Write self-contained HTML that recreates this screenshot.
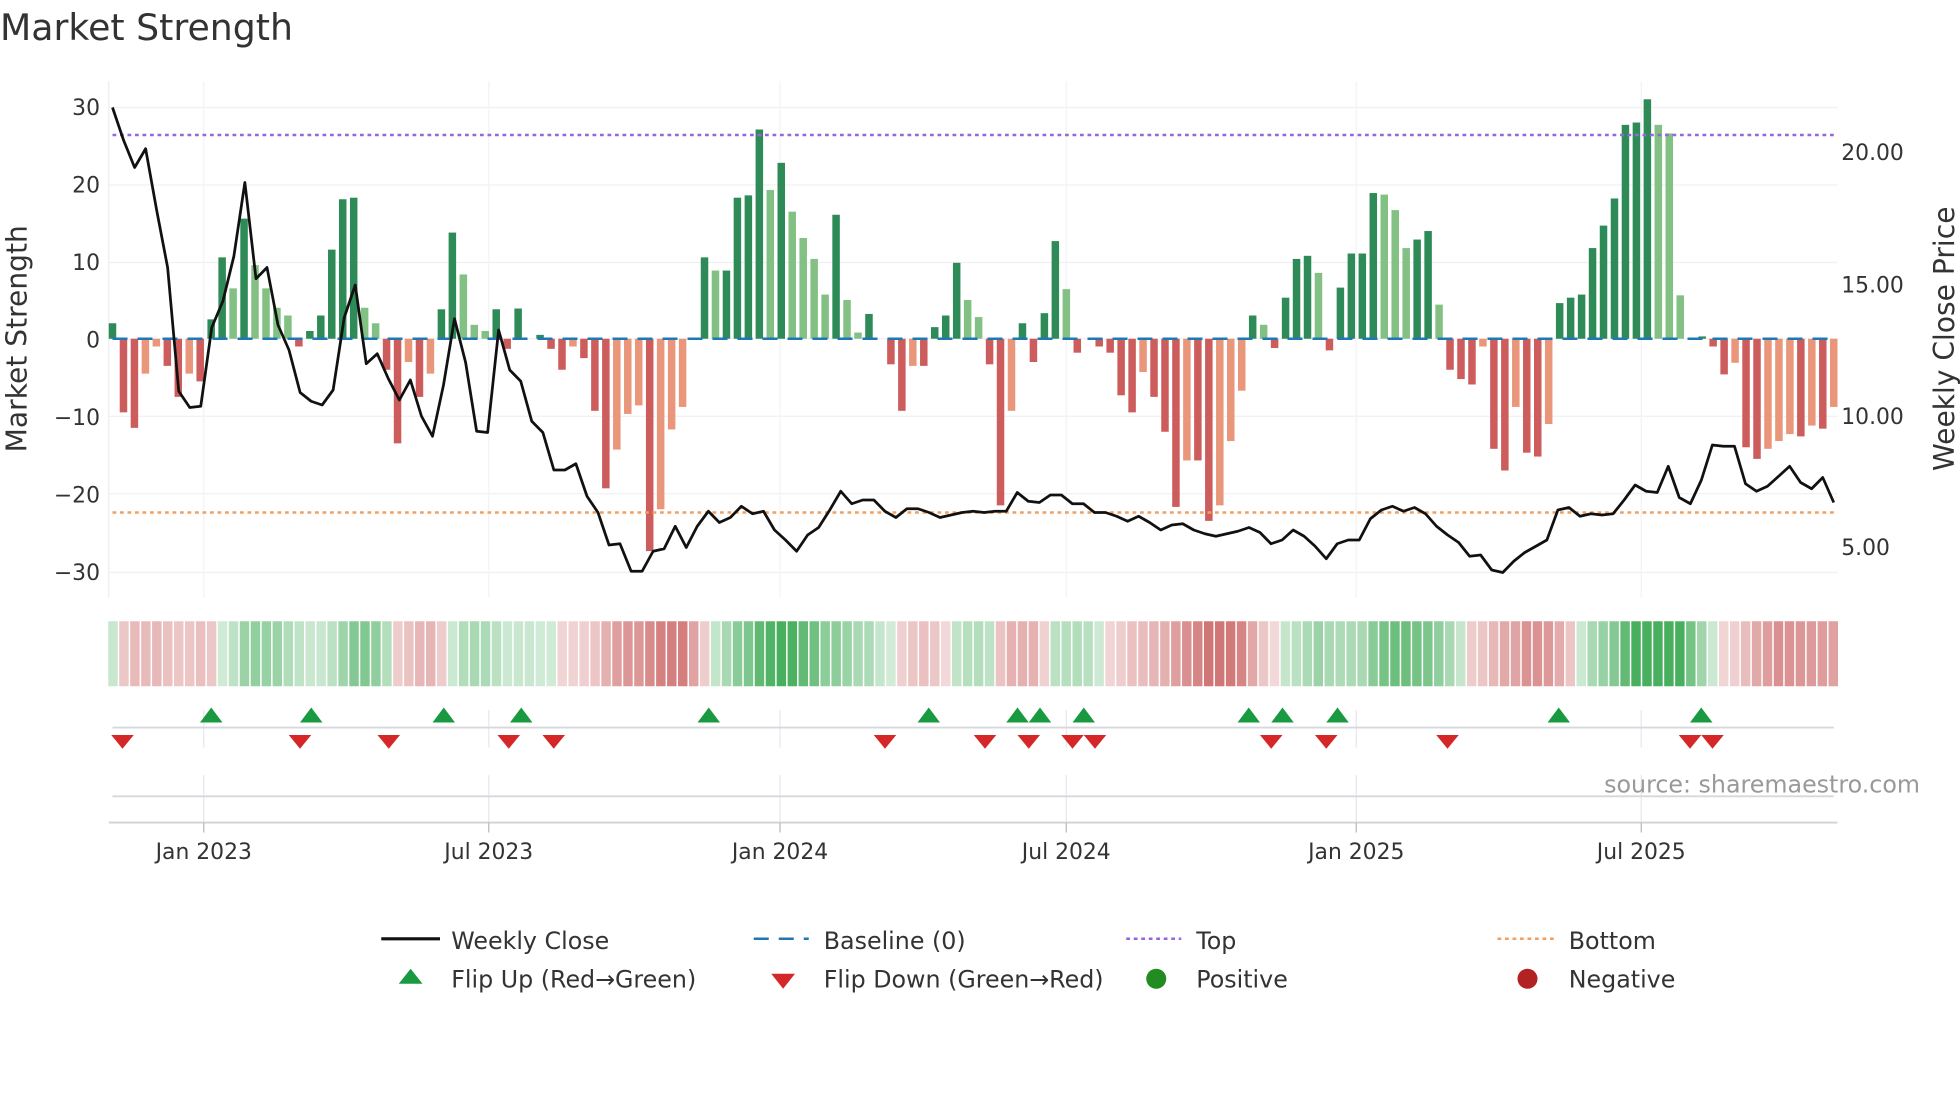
<!DOCTYPE html>
<html><head><meta charset="utf-8"><style>
html,body{margin:0;padding:0;background:#fff;width:1960px;height:1102px;overflow:hidden}
svg{display:block;font-family:"DejaVu Sans","Liberation Sans",sans-serif}
</style></head><body>
<svg id="s" width="1960" height="1102" viewBox="0 0 1568 881.6" xmlns="http://www.w3.org/2000/svg">
<text x="0" y="32" font-size="29" fill="#333">Market Strength</text>
<g id="g"></g>
<text x="1536" y="634" font-size="19" fill="#999" text-anchor="end">source: sharemaestro.com</text>
<text transform="translate(21,271) rotate(-90)" font-size="22.5" fill="#333" text-anchor="middle">Market Strength</text>
<text transform="translate(1563,271) rotate(-90)" font-size="22.5" fill="#333" text-anchor="middle">Weekly Close Price</text>
<g font-size="17.5" fill="#333">
<text x="80" y="92" text-anchor="end">30</text>
<text x="80" y="154" text-anchor="end">20</text>
<text x="80" y="216" text-anchor="end">10</text>
<text x="80" y="278" text-anchor="end">0</text>
<text x="80" y="340" text-anchor="end">−10</text>
<text x="80" y="402" text-anchor="end">−20</text>
<text x="80" y="464" text-anchor="end">−30</text>
<text x="1473" y="128">20.00</text>
<text x="1473" y="234">15.00</text>
<text x="1473" y="339">10.00</text>
<text x="1473" y="444">5.00</text>
<text x="163" y="687" text-anchor="middle">Jan 2023</text>
<text x="391" y="687" text-anchor="middle">Jul 2023</text>
<text x="624" y="687" text-anchor="middle">Jan 2024</text>
<text x="853" y="687" text-anchor="middle">Jul 2024</text>
<text x="1085" y="687" text-anchor="middle">Jan 2025</text>
<text x="1313" y="687" text-anchor="middle">Jul 2025</text>
</g>
<g font-size="19" fill="#333">
<line x1="305" y1="751" x2="352" y2="751" stroke="#111" stroke-width="2.5"/>
<text x="361" y="759">Weekly Close</text>
<line x1="603" y1="751" x2="647" y2="751" stroke="#1f77b4" stroke-width="2" stroke-dasharray="12,8"/>
<text x="659" y="759">Baseline (0)</text>
<line x1="901" y1="751" x2="945" y2="751" stroke="#9467dd" stroke-width="2" stroke-dasharray="3,3"/>
<text x="957" y="759">Top</text>
<line x1="1198" y1="751" x2="1243" y2="751" stroke="#f0a060" stroke-width="2" stroke-dasharray="3,3"/>
<text x="1255" y="759">Bottom</text>
<polygon points="319,787 338,787 328.5,775" fill="#1a9a40"/>
<text x="361" y="790">Flip Up (Red→Green)</text>
<polygon points="617,779 636,779 626.5,791" fill="#d62728"/>
<text x="659" y="790">Flip Down (Green→Red)</text>
<circle cx="925" cy="783" r="8" fill="#228b22"/>
<text x="957" y="790">Positive</text>
<circle cx="1222" cy="783" r="8" fill="#b22222"/>
<text x="1255" y="790">Negative</text>
</g>
</svg>
<script>
var vals=[2,-9.5,-11.5,-4.5,-1,-3.5,-7.5,-4.5,-5.5,2.5,10.5,6.5,15.5,9.5,6.5,4,3,-1,1,3,11.5,18,18.2,4,2,-4,-13.5,-3,-7.5,-4.5,3.8,13.7,8.3,1.8,1,3.8,-1.3,3.9,0,0.5,-1.3,-4,-1,-2.5,-9.3,-19.3,-14.3,-9.7,-8.6,-27.4,-22,-11.7,-8.8,0,10.5,8.8,8.8,18.2,18.5,27,19.2,22.7,16.4,13,10.3,5.7,16,5,0.8,3.2,0,-3.3,-9.3,-3.5,-3.5,1.5,3,9.8,5,2.8,-3.3,-21.5,-9.3,2,-3,3.3,12.6,6.4,-1.8,0,-1,-1.8,-7.3,-9.5,-4.3,-7.5,-12,-21.7,-15.7,-15.7,-23.5,-21.5,-13.2,-6.7,3,1.8,-1.2,5.3,10.3,10.7,8.5,-1.5,6.6,11,11,18.8,18.6,16.6,11.7,12.8,13.9,4.4,-4,-5.2,-5.9,-1,-14.2,-17,-8.8,-14.7,-15.2,-11,4.6,5.3,5.7,11.7,14.6,18.1,27.6,27.9,30.9,27.6,26.5,5.6,0,0.3,-1,-4.6,-3.1,-14,-15.5,-14.2,-13.2,-12.3,-12.6,-11.2,-11.6,-8.8];
var n=vals.length,x0=90,x1=1467,st=(x1-x0)/(n-1),h='';
[86,148,210,271,333,395,458].forEach(function(y){h+='<line x1="87" x2="1470" y1="'+y+'" y2="'+y+'" stroke="#eef0f4" stroke-width="1"/>';});
[163,391,624,853,1085,1313].forEach(function(x){h+='<line x1="'+x+'" x2="'+x+'" y1="65" y2="478" stroke="#f2f3f6"/><line x1="'+x+'" x2="'+x+'" y1="568" y2="598" stroke="#e6e8ee"/><line x1="'+x+'" x2="'+x+'" y1="620" y2="665" stroke="#e6e8ee"/>';});
h+='<line x1="87" x2="87" y1="65" y2="478" stroke="#eceef2"/>';
for(var i=0;i<n;i++){var v=vals[i],p=i?vals[i-1]:0,x=x0+i*st;if(v==0)continue;
var dark=Math.abs(v)>=Math.abs(p)||(v>0)!=(p>0);var c=v>0?(dark?'#2e8b57':'#82c183'):(dark?'#cd5c5c':'#e9967a');
var y=271-v*6.2;h+='<rect x="'+(x-3)+'" y="'+Math.min(y,271)+'" width="6" height="'+Math.abs(v*6.2)+'" fill="'+c+'"/>';}
h+='<line x1="90" x2="1467" y1="271" y2="271" stroke="#1f77b4" stroke-width="2" stroke-dasharray="12,8"/>';
h+='<line x1="90" x2="1470" y1="108" y2="108" stroke="#9467dd" stroke-width="2" stroke-dasharray="3,3"/>';
h+='<line x1="90" x2="1470" y1="410" y2="410" stroke="#f0a060" stroke-width="2" stroke-dasharray="3,3"/>';
var L=[86,112,134,119,168,214,313,326,325,262,241,205,146,223,214,260,280,314,321,324,312,254,228,291,283,303,320,304,333,349,308,255,290,345,346,264,296,305,337,346,376,376,371,397,410,436,435,457,457,441,439,421,438,421,409,418,414,405,411,409,424,432,441,428,422,408,393,403,400,400,409,414,407,407,410,414,412,410,409,410,409,409,394,401,402,396,396,403,403,410,410,413,417,413,418,424,420,419,424,427,429,427,425,422,426,435,432,424,429,437,447,435,432,432,415,408,405,409,406,411,421,428,434,445,444,456,458,449,442,437,432,408,406,413,411,412,411,400,388,393,394,373,398,403,384,356,357,357,387,393,389,381,373,386,391,382,402];
var ls=(x1-x0)/(L.length-1),pts=L.map(function(y,i){return (x0+i*ls).toFixed(1)+','+y;}).join(' ');
h+='<polyline points="'+pts+'" fill="none" stroke="#111" stroke-width="2.2" stroke-linejoin="round"/>';
var cw=(1471-86)/n;
for(var i=0;i<n;i++){var a=0,c=0;for(var k=-3;k<=0;k++){if(vals[i+k]!==undefined){a+=vals[i+k];c++;}}a/=c;
var al=Math.min(0.92,0.22+Math.abs(a)/22*0.7);var col=a>=0?'56,168,80':'200,90,90';
h+='<rect x="'+(86+i*cw+0.6)+'" y="497" width="'+(cw-1.2)+'" height="52" fill="rgba('+col+','+al.toFixed(2)+')"/>';}
h+='<line x1="90" x2="1467" y1="582" y2="582" stroke="#d6d8dc" stroke-width="1.5"/>';
h+='<line x1="90" x2="1467" y1="637" y2="637" stroke="#d6d8dc" stroke-width="1.5"/>';
h+='<line x1="87" x2="1470" y1="658" y2="658" stroke="#d0d2d6" stroke-width="1.5"/>';
[163,391,624,853,1085,1313].forEach(function(x){h+='<line x1="'+x+'" x2="'+x+'" y1="658" y2="666" stroke="#bbb"/>';});
[169,249,355,417,567,743,814,832,867,999,1026,1070,1247,1361].forEach(function(x){h+='<polygon points="'+(x-9)+',578 '+(x+9)+',578 '+x+',566" fill="#1a9a40"/>';});
[98,240,311,407,443,708,788,823,858,876,1017,1061,1158,1352,1370].forEach(function(x){h+='<polygon points="'+(x-9)+',588 '+(x+9)+',588 '+x+',599" fill="#d62728"/>';});
document.getElementById('g').innerHTML=h;
</script>
</body></html>
